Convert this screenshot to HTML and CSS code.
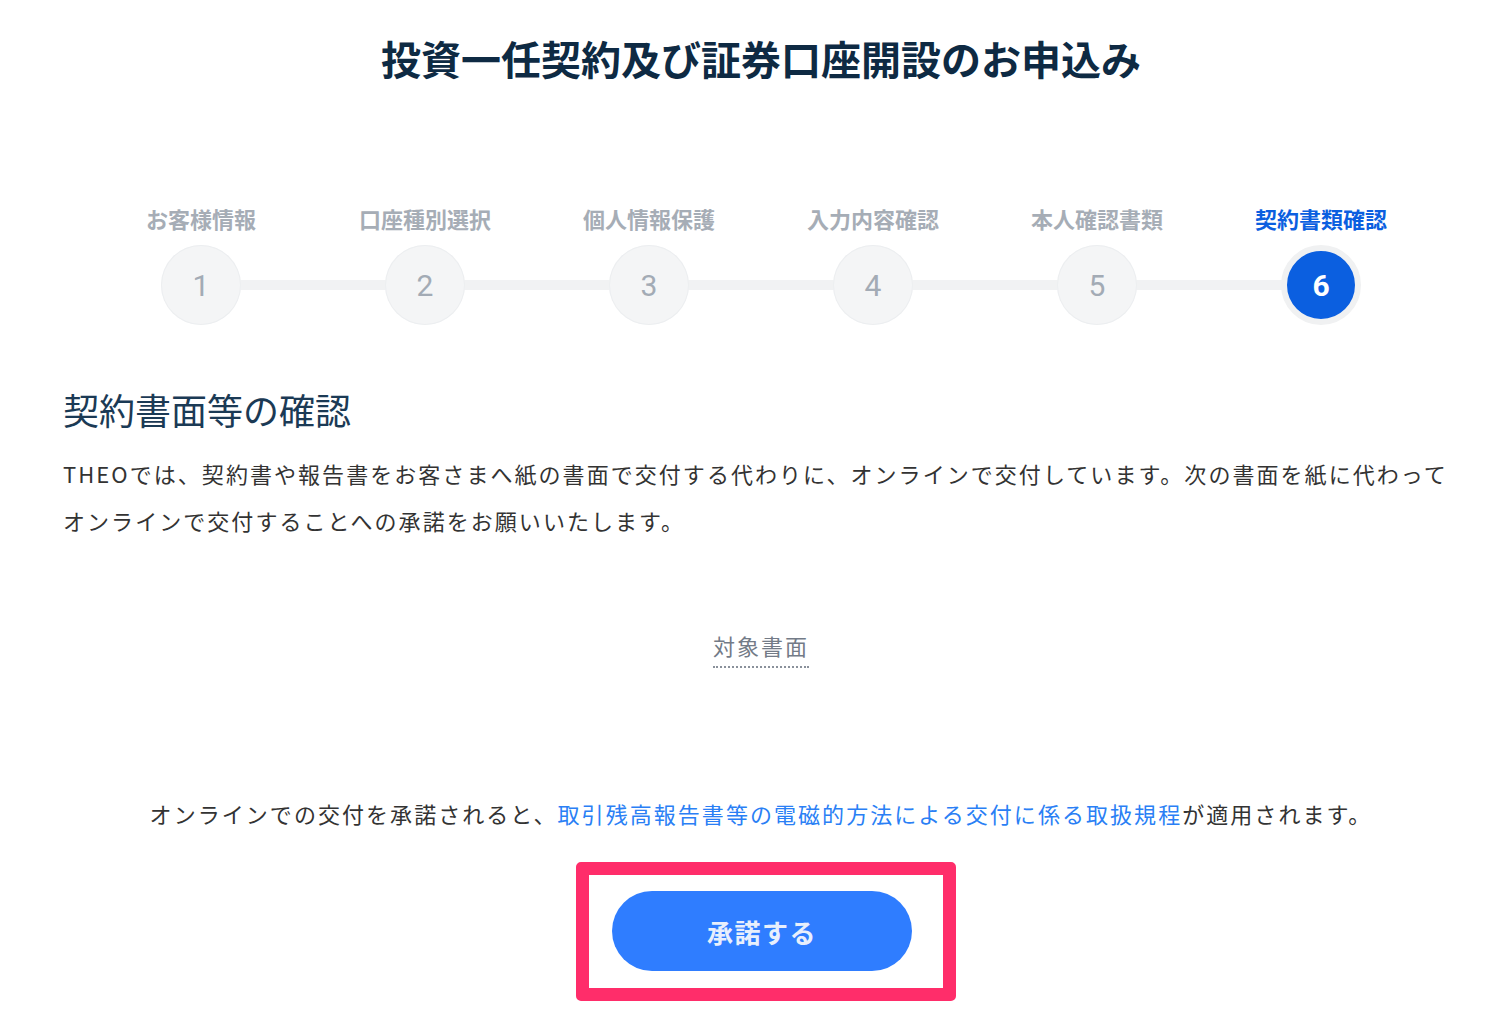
FILE: index.html
```html
<!DOCTYPE html>
<html lang="ja">
<head>
  <meta charset="UTF-8" />
  <meta name="viewport" content="width=device-width, initial-scale=1.0"/>
  <title>投資一任契約及び証券口座開設のお申込み</title>
  <link rel="stylesheet" href="styles.css">
</head>
<body>
  <main class="page">
    <h1 class="title">投資一任契約及び証券口座開設のお申込み</h1>

    <ol class="steps">
      <li class="step"><span class="step-label">お客様情報</span><span class="step-num">1</span></li>
      <li class="step"><span class="step-label">口座種別選択</span><span class="step-num">2</span></li>
      <li class="step"><span class="step-label">個人情報保護</span><span class="step-num">3</span></li>
      <li class="step"><span class="step-label">入力内容確認</span><span class="step-num">4</span></li>
      <li class="step"><span class="step-label">本人確認書類</span><span class="step-num">5</span></li>
      <li class="step active"><span class="step-label">契約書類確認</span><span class="step-num">6</span></li>
    </ol>

    <section class="consent">
      <h2>契約書面等の確認</h2>
      <p class="lead">THEOでは、契約書や報告書をお客さまへ紙の書面で交付する代わりに、オンラインで交付しています。次の書面を紙に代わってオンラインで交付することへの承諾をお願いいたします。</p>

      <div class="docs">
        <span class="docs-title">対象書面</span>
      </div>

      <p class="note">オンラインでの交付を承諾されると、<a href="#">取引残高報告書等の電磁的方法による交付に係る取扱規程</a>が適用されます。</p>

      <div class="actions">
        <div class="highlight">
          <button class="accept">承諾する</button>
        </div>
      </div>
    </section>
  </main>
</body>
</html>
```

FILE: styles.css
```css
body {
  margin: 0;
  font-family: "Noto Sans CJK JP", "Noto Sans", sans-serif;
  background: #fff;
  color: #333;
}

.page {
  width: 1396px;
  margin-left: 63px;
}

.title {
  margin: 35px 0 0;
  font-size: 40px;
  line-height: 46px;
  font-weight: 700;
  color: #0e2a43;
  text-align: center;
}

/* step indicator */
.steps {
  position: relative;
  display: grid;
  grid-template-columns: repeat(6, 224px);
  justify-content: center;
  list-style: none;
  margin: 122px 0 0;
  padding: 0;
}

.steps::before {
  content: "";
  position: absolute;
  left: 138px;
  right: 138px;
  top: 77px;
  height: 10px;
  background: #f1f2f3;
}

.step {
  position: relative;
  display: flex;
  flex-direction: column;
  align-items: center;
  gap: 12px;
}

.step-label {
  font-size: 22px;
  line-height: 30px;
  font-weight: 700;
  color: #a6adb6;
}

.step-num {
  display: flex;
  align-items: center;
  justify-content: center;
  width: 80px;
  height: 80px;
  border-radius: 50%;
  background: #f4f5f6;
  box-shadow: inset 0 0 0 1px #eceef0;
  font-family: Roboto, "Noto Sans", sans-serif;
  font-size: 30px;
  color: #a3abb5;
}

.step.active .step-label {
  color: #0b5fe0;
}

.step.active .step-num {
  box-sizing: border-box;
  background: #0b5fe0;
  border: 6px solid #f0f1f2;
  box-shadow: none;
  color: #fff;
  font-weight: 700;
}

/* consent section */
.consent h2 {
  margin: 62px 0 0;
  font-size: 36px;
  line-height: 44px;
  font-weight: 400;
  color: #1b3a55;
}

.lead {
  margin: 19px 0 0;
  font-size: 22px;
  line-height: 47px;
  letter-spacing: 2.05px;
  color: #333;
}

.docs {
  display: flex;
  justify-content: center;
  margin-top: 85px;
}

.docs-title {
  font-size: 22px;
  line-height: 32px;
  letter-spacing: 2px;
  color: #737b87;
  padding-bottom: 5px;
  border-bottom: 2px dotted #8a919b;
}

.note {
  margin: 129px 0 0;
  text-align: center;
  font-size: 22px;
  line-height: 32px;
  letter-spacing: 2.05px;
  color: #333;
}

.note a {
  color: #2a7ff5;
  text-decoration: none;
}

.actions {
  display: flex;
  justify-content: center;
  margin-top: 33px;
}

.highlight {
  border: 13px solid #ff2d6a;
  border-radius: 5px;
  padding: 16px 31px 17px 23px;
  margin-left: 10px;
}

.accept {
  display: block;
  width: 300px;
  height: 80px;
  border: none;
  border-radius: 40px;
  background: #2f7dff;
  color: #e8effc;
  font-family: "Noto Sans CJK JP", sans-serif;
  font-size: 26px;
  font-weight: 700;
  letter-spacing: 1.5px;
  cursor: pointer;
}
```
